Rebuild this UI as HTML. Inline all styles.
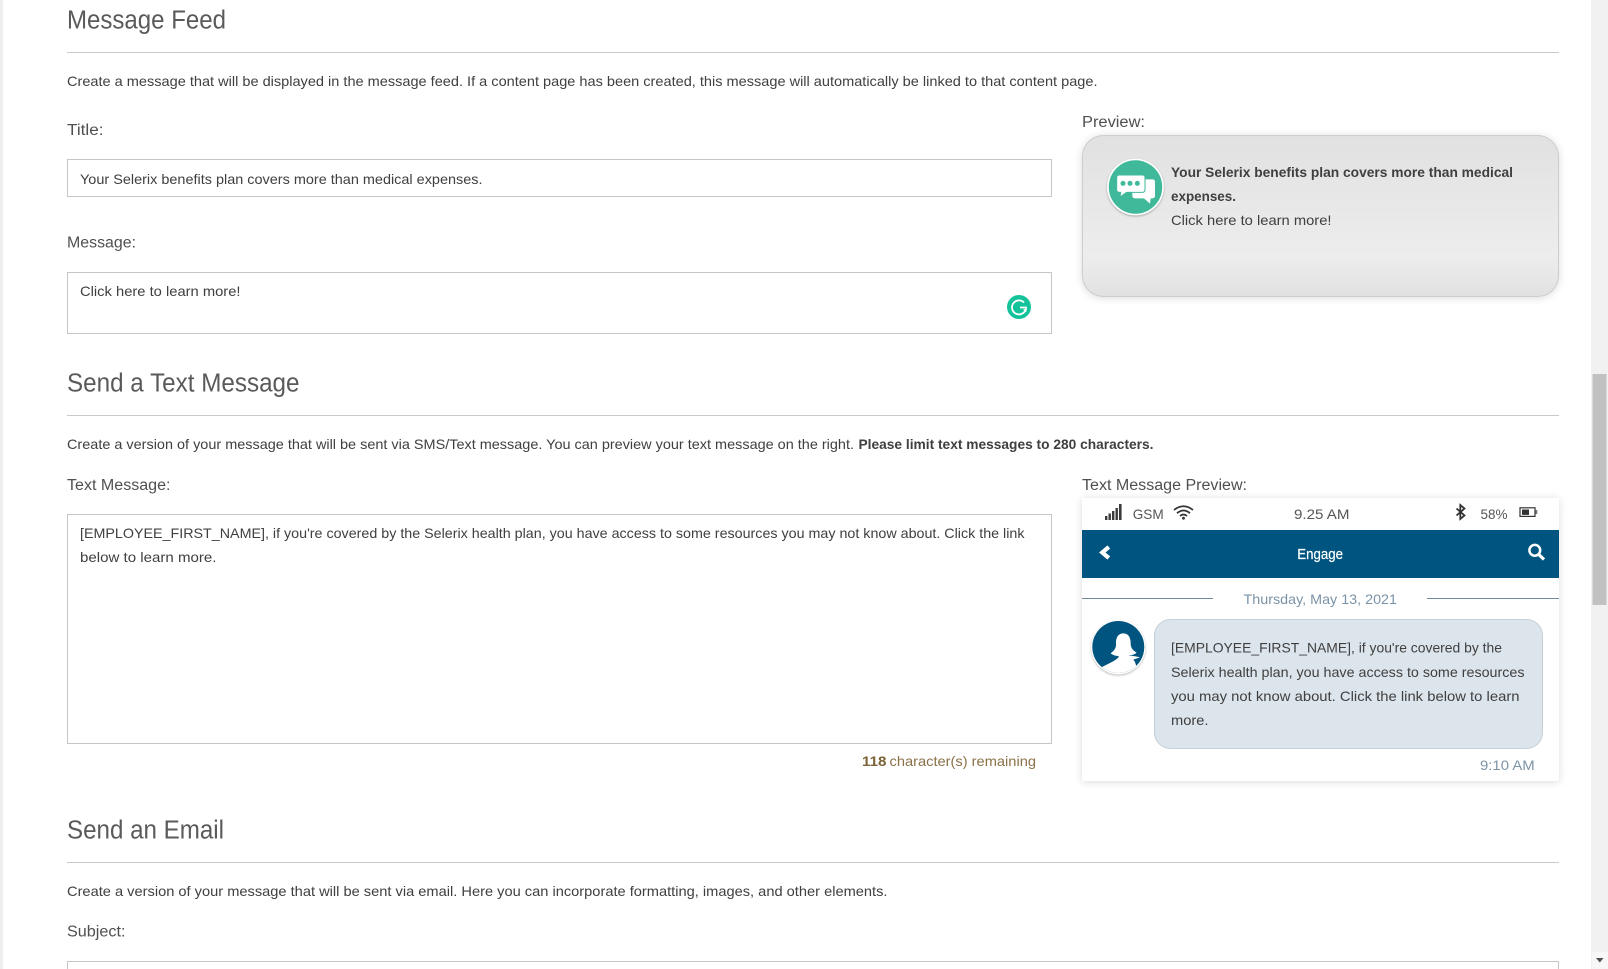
<!DOCTYPE html>
<html><head><meta charset="utf-8"><title>Message Feed</title>
<style>
html,body{margin:0;padding:0;background:#fff;width:1608px;height:969px;overflow:hidden}
svg{display:block;position:absolute;left:0;top:0}
text{font-family:"Liberation Sans",sans-serif;fill:#3f3f3f}
.h{font-size:25.5px;fill:#5a5a5a}
.p{font-size:14px}
.l{font-size:15.5px;fill:#505050}
.b{font-weight:bold}
</style></head><body>
<svg width="1608" height="969" viewBox="0 0 1608 969" xmlns="http://www.w3.org/2000/svg">
<defs>
<linearGradient id="g" x1="0" y1="0" x2="0" y2="1">
<stop offset="0" stop-color="#e1e1e1"/><stop offset=".75" stop-color="#ededed"/><stop offset="1" stop-color="#e1e1e1"/>
</linearGradient>
<filter id="s" x="-5%" y="-10%" width="110%" height="120%"><feDropShadow dx="0" dy="1" stdDeviation="4" flood-color="#000" flood-opacity=".14"/></filter>
<filter id="s2" x="-20%" y="-20%" width="140%" height="140%"><feDropShadow dx="0" dy="1" stdDeviation="1" flood-color="#000" flood-opacity=".3"/></filter>
<clipPath id="av"><circle cx="1118.3" cy="647" r="26"/></clipPath>
</defs>

<rect x="0" y="0" width="3" height="969" fill="#eeeeee"/>
<rect x="1591" y="0" width="17" height="969" fill="#f1f1f1"/>
<rect x="1592.5" y="374" width="14" height="231" fill="#c1c1c1"/>
<rect x="1592" y="952" width="16" height="17" fill="#f7f7f7"/>
<path d="M1596,958 H1603.5 L1599.8,962.5Z" fill="#505050"/>

<!-- Section 1 -->
<text class="h" x="67" y="28.5" textLength="159" lengthAdjust="spacingAndGlyphs">Message Feed</text>
<rect x="67" y="52" width="1492" height="1" fill="#c9c9c9"/>
<text class="p" x="67" y="86" textLength="1030.5" lengthAdjust="spacingAndGlyphs">Create a message that will be displayed in the message feed. If a content page has been created, this message will automatically be linked to that content page.</text>
<text class="l" x="67" y="135" textLength="36.5" lengthAdjust="spacingAndGlyphs">Title:</text>
<rect x="67.5" y="159.5" width="984" height="37" fill="#fff" stroke="#c6c6c6"/>
<text class="p" x="80" y="184" textLength="402.5" lengthAdjust="spacingAndGlyphs">Your Selerix benefits plan covers more than medical expenses.</text>
<text class="l" x="67" y="247.5" textLength="69" lengthAdjust="spacingAndGlyphs">Message:</text>
<rect x="67.5" y="272.5" width="984" height="61" fill="#fff" stroke="#c6c6c6"/>
<text class="p" x="80" y="296" textLength="160.5" lengthAdjust="spacingAndGlyphs">Click here to learn more!</text>
<circle cx="1019" cy="307" r="12" fill="#15c39a"/>
<path d="M1024,302.5 A7,7 0 1 0 1026,307.5 H1020" fill="none" stroke="#fff" stroke-width="1.8"/>
<path d="M1023,309.5 l3,3 l1,-4z" fill="#fff"/>

<text class="l" x="1082" y="127" textLength="63" lengthAdjust="spacingAndGlyphs">Preview:</text>
<rect x="1082.5" y="135.5" width="476" height="161" rx="21" fill="url(#g)" stroke="#cdcdcd" filter="url(#s)"/>
<circle cx="1135.5" cy="187" r="27.5" fill="#3fb99b" stroke="#fff" stroke-width="1.6" filter="url(#s2)"/>
<g transform="translate(1100,155) scale(.3333)">
<path d="M105,73 H157 Q165,73 165,81 V122 Q165,130 157,130 H152 L150,146 L132,130 H105 Q97,130 97,122 V81 Q97,73 105,73Z" fill="#fff"/>
<path d="M58,60 H127 Q135,60 135,68 V104 Q135,112 127,112 H80 L60,126 L62,112 H58 Q50,112 50,104 V68 Q50,60 58,60Z" fill="#fff" stroke="#3fb99b" stroke-width="3"/>
<circle cx="69" cy="85" r="7.5" fill="#3fb99b"/><circle cx="90" cy="85" r="7.5" fill="#3fb99b"/><circle cx="112" cy="85" r="7.5" fill="#3fb99b"/>
</g>
<text class="p b" x="1171" y="177" textLength="342" lengthAdjust="spacingAndGlyphs">Your Selerix benefits plan covers more than medical</text>
<text class="p b" x="1171" y="201" textLength="65" lengthAdjust="spacingAndGlyphs">expenses.</text>
<text class="p" x="1171" y="225" textLength="160.5" lengthAdjust="spacingAndGlyphs">Click here to learn more!</text>

<!-- Section 2 -->
<text class="h" x="67" y="391.5" textLength="232.5" lengthAdjust="spacingAndGlyphs">Send a Text Message</text>
<rect x="67" y="415" width="1492" height="1" fill="#c9c9c9"/>
<text class="p" x="67" y="449" textLength="787" lengthAdjust="spacingAndGlyphs">Create a version of your message that will be sent via SMS/Text message. You can preview your text message on the right.</text>
<text class="p b" x="858.5" y="449" textLength="295" lengthAdjust="spacingAndGlyphs">Please limit text messages to 280 characters.</text>
<text class="l" x="67" y="490" textLength="103.5" lengthAdjust="spacingAndGlyphs">Text Message:</text>
<rect x="67.5" y="514.5" width="984" height="229" fill="#fff" stroke="#c6c6c6"/>
<text class="p" x="80" y="538" textLength="944.5" lengthAdjust="spacingAndGlyphs">[EMPLOYEE_FIRST_NAME], if you're covered by the Selerix health plan, you have access to some resources you may not know about. Click the link</text>
<text class="p" x="80" y="562" textLength="136.5" lengthAdjust="spacingAndGlyphs">below to learn more.</text>
<text class="p b" x="862" y="766" textLength="24.5" lengthAdjust="spacingAndGlyphs" style="fill:#7b6236">118</text>
<text class="p" x="889.5" y="766" textLength="146.5" lengthAdjust="spacingAndGlyphs" style="fill:#8a7148">character(s) remaining</text>

<text class="l" x="1082" y="490" textLength="165" lengthAdjust="spacingAndGlyphs">Text Message Preview:</text>
<rect x="1082" y="498" width="477" height="283" fill="#fff" filter="url(#s)"/>

<!-- status bar -->
<g fill="#3c3c3c">
<rect x="1105" y="516" width="2.4" height="4"/><rect x="1108.5" y="513.5" width="2.4" height="6.5"/><rect x="1112" y="511" width="2.4" height="9"/><rect x="1115.5" y="508" width="2.4" height="12"/><rect x="1119" y="504" width="2.6" height="16"/>
</g>
<text class="p" x="1132.7" y="519" textLength="31" lengthAdjust="spacingAndGlyphs" style="fill:#555">GSM</text>
<g fill="none" stroke="#333" stroke-width="1.7">
<path d="M1174,510 Q1183.5,502.5 1193,510"/><path d="M1177,513.2 Q1183.5,507.7 1190,513.2"/><path d="M1180,516 Q1183.5,513 1187,516"/>
</g>
<circle cx="1183.5" cy="518.2" r="1.4" fill="#333"/>
<text class="p" x="1294" y="519" textLength="55.5" lengthAdjust="spacingAndGlyphs" style="fill:#555">9.25 AM</text>
<path d="M1456.5,508.5 L1464.5,515.5 L1460.3,519 V505 L1464.5,508.5 L1456.5,515.5" fill="none" stroke="#333" stroke-width="1.8"/>
<text class="p" x="1480.5" y="519" textLength="27" lengthAdjust="spacingAndGlyphs" style="fill:#555">58%</text>
<rect x="1520" y="507.8" width="15" height="8.6" fill="#fff" stroke="#333" stroke-width="1.2"/>
<rect x="1522" y="509.5" width="7" height="5.4" fill="#333"/>
<rect x="1535.5" y="510" width="1.8" height="4" fill="#777"/>

<!-- nav bar -->
<rect x="1082" y="530" width="477" height="48" fill="#005580"/>
<path d="M1108.8,547 L1102.3,552.5 L1108.8,558" fill="none" stroke="#fff" stroke-width="4.2"/>
<text class="p" x="1297.3" y="558.8" textLength="45.7" lengthAdjust="spacingAndGlyphs" style="fill:#fff;font-size:15px;stroke:#fff;stroke-width:.2">Engage</text>
<circle cx="1534.8" cy="550.3" r="5.4" fill="none" stroke="#fff" stroke-width="2.5"/>
<path d="M1538.6,554.3 L1544,559.5" stroke="#fff" stroke-width="3.2" fill="none"/>

<!-- date -->
<rect x="1082" y="598" width="131" height="1" fill="#6f8a9c"/>
<rect x="1427" y="598" width="132" height="1" fill="#6f8a9c"/>
<text class="p" x="1243.5" y="604" textLength="153.5" lengthAdjust="spacingAndGlyphs" style="fill:#7b93a8">Thursday, May 13, 2021</text>

<!-- avatar -->
<circle cx="1118.3" cy="647.3" r="27" fill="#fff" filter="url(#s2)"/>
<circle cx="1118.3" cy="647" r="26" fill="#005580"/>
<g clip-path="url(#av)"><g transform="translate(1090,618) scale(.3333)">
<path d="M100,46 C84,46 77,60 78,78 C79,90 72,98 62,106 C70,112 80,114 86,114 C88,120 70,130 50,140 L30,150 L50,180 L150,180 L135,132 L130,125 L150,118 C130,112 118,114 116,112 C124,113 134,110 140,104 C128,96 122,90 122,76 C122,60 116,46 100,46Z" fill="#fff"/>
</g></g>

<!-- bubble -->
<rect x="1154.5" y="619.5" width="388" height="129" rx="16" fill="#dce5ec" stroke="#c4d0d9"/>
<text class="p" x="1171" y="652.7" textLength="331" lengthAdjust="spacingAndGlyphs">[EMPLOYEE_FIRST_NAME], if you're covered by the</text>
<text class="p" x="1171" y="677" textLength="353.5" lengthAdjust="spacingAndGlyphs">Selerix health plan, you have access to some resources</text>
<text class="p" x="1171" y="701" textLength="348.5" lengthAdjust="spacingAndGlyphs">you may not know about. Click the link below to learn</text>
<text class="p" x="1171" y="725" textLength="37.5" lengthAdjust="spacingAndGlyphs">more.</text>
<text class="p" x="1480" y="770" textLength="54.7" lengthAdjust="spacingAndGlyphs" style="fill:#7d93a6">9:10 AM</text>

<!-- Section 3 -->
<text class="h" x="67" y="838.5" textLength="157" lengthAdjust="spacingAndGlyphs">Send an Email</text>
<rect x="67" y="862" width="1492" height="1" fill="#c9c9c9"/>
<text class="p" x="67" y="896" textLength="820.5" lengthAdjust="spacingAndGlyphs">Create a version of your message that will be sent via email. Here you can incorporate formatting, images, and other elements.</text>
<text class="l" x="67" y="936.5" textLength="58.5" lengthAdjust="spacingAndGlyphs">Subject:</text>
<rect x="67.5" y="961.5" width="1491" height="30" fill="#fff" stroke="#c6c6c6"/>
</svg>
</body></html>
